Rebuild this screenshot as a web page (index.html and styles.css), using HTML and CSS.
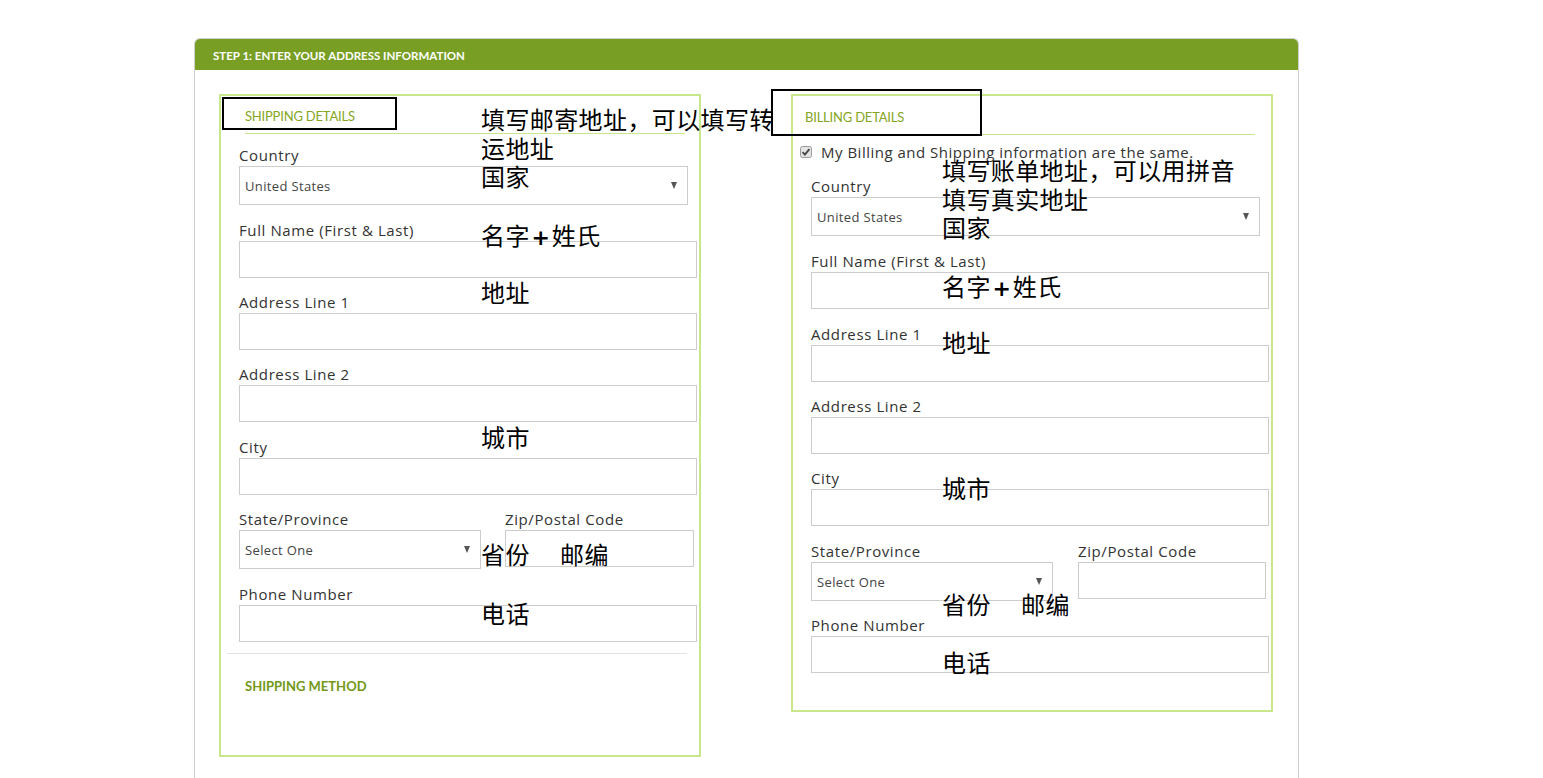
FILE: index.html
```html
<!DOCTYPE html>
<html lang="zh-CN">
<head>
  <meta charset="UTF-8">
  <title>Checkout - Address</title>
  <meta name="viewport" content="width=device-width, initial-scale=1">
  <link rel="stylesheet" href="styles.css">
</head>
<body>

<div class="panel">
  <div class="panel-head">STEP 1: ENTER YOUR ADDRESS INFORMATION</div>
  <div class="panel-body">

    <!-- shipping -->
    <div class="box shipping">
      <h3 class="box-title">SHIPPING DETAILS</h3>
      <div class="field sel">
        <label>Country</label>
        <div class="select wide"><select><option>United States</option></select></div>
      </div>
      <div class="field">
        <label>Full Name (First &amp; Last)</label>
        <input type="text">
      </div>
      <div class="field">
        <label>Address Line 1</label>
        <input type="text">
      </div>
      <div class="field gap">
        <label>Address Line 2</label>
        <input type="text">
      </div>
      <div class="field">
        <label>City</label>
        <input type="text">
      </div>
      <div class="field-row">
        <div class="field sel">
          <label>State/Province</label>
          <div class="select state"><select><option>Select One</option></select></div>
        </div>
        <div class="field zip">
          <label>Zip/Postal Code</label>
          <input type="text">
        </div>
      </div>
      <div class="field last">
        <label>Phone Number</label>
        <input type="text">
      </div>
      <hr class="sep">
      <h3 class="method">SHIPPING METHOD</h3>
    </div>

    <!-- billing -->
    <div class="box billing">
      <h3 class="box-title">BILLING DETAILS</h3>
      <div class="same">
        <svg class="check" width="12" height="12" viewBox="0 0 12 12">
          <rect x="0.5" y="0.5" width="11" height="11" rx="2" fill="#e4e4e4" stroke="#9a9a9a"/>
          <path d="M2.6 6.2 L4.9 8.6 L9.4 3.2" fill="none" stroke="#444" stroke-width="1.8"/>
        </svg>
        <span>My Billing and Shipping information are the same.</span>
      </div>
      <div class="field sel">
        <label>Country</label>
        <div class="select wide"><select><option>United States</option></select></div>
      </div>
      <div class="field gap">
        <label>Full Name (First &amp; Last)</label>
        <input type="text">
      </div>
      <div class="field">
        <label>Address Line 1</label>
        <input type="text">
      </div>
      <div class="field">
        <label>Address Line 2</label>
        <input type="text">
      </div>
      <div class="field gap">
        <label>City</label>
        <input type="text">
      </div>
      <div class="field-row">
        <div class="field sel tight">
          <label>State/Province</label>
          <div class="select state"><select><option>Select One</option></select></div>
        </div>
        <div class="field zip">
          <label>Zip/Postal Code</label>
          <input type="text">
        </div>
      </div>
      <div class="field">
        <label>Phone Number</label>
        <input type="text">
      </div>
    </div>

  </div>
</div>

<!-- notes drawn over the form -->
<div class="mark mark-ship"></div>
<div class="mark mark-bill"></div>

<div class="note s-intro">填写邮寄地址，可以填写转<br>运地址<br>国家</div>
<div class="note s-name">名字<b>+</b>姓氏</div>
<div class="note s-addr">地址</div>
<div class="note s-city">城市</div>
<div class="note s-state">省份</div>
<div class="note s-zip">邮编</div>
<div class="note s-phone">电话</div>

<div class="note b-intro">填写账单地址，可以用拼音<br>填写真实地址<br>国家</div>
<div class="note b-name">名字<b>+</b>姓氏</div>
<div class="note b-addr">地址</div>
<div class="note b-city">城市</div>
<div class="note b-state">省份</div>
<div class="note b-zip">邮编</div>
<div class="note b-phone">电话</div>

</body>
</html>
```

FILE: styles.css
```css
body { margin: 0; background: #fff; font-family: "Open Sans", "Noto Sans", sans-serif; color: #333; position: relative; }

.panel { width: 1105px; box-sizing: border-box; margin: 38px 0 0 194px; border: 1px solid #cfcfcf; border-bottom: none; border-radius: 6px 6px 0 0; min-height: 760px; }
.panel-head { background: #789e24; color: #fff; font-family: Lato, sans-serif; font-size: 11.5px; font-weight: bold; height: 29px; line-height: 29px; padding: 2px 0 0 18px; border-radius: 5px 5px 0 0; }
.panel-body { display: flex; align-items: flex-start; gap: 90px; padding: 24px 0 40px 24px; }

.box { width: 482px; box-sizing: border-box; border: 2px solid #c8e68a; padding: 0 0 0 18px; }
.billing { padding-bottom: 22px; }

.box-title { margin: 0 14px 12px 6px; padding: 12px 0 9px; font-family: Lato, sans-serif; font-size: 13px; line-height: 16px; font-weight: normal; color: #86a623; border-bottom: 1px solid #c8e68a; letter-spacing: -0.2px; }
.billing .box-title { margin: 0 16px 8px -6px; padding-top: 13px; }

.same { display: flex; align-items: center; gap: 9px; margin: 0 0 16px -11px; font-size: 15px; line-height: 18px; letter-spacing: 0.5px; color: #333; }
.check { flex: none; }

.field { margin-bottom: 15px; }
.field.gap, .field.sel { margin-bottom: 16px; }
.field.sel.tight { margin-bottom: 15px; }
.field.last { margin-bottom: 0; }
.field label { display: block; font-size: 15px; line-height: 18px; letter-spacing: 0.6px; margin-bottom: 2px; color: #333; }

.field input { display: block; width: 458px; height: 37px; box-sizing: border-box; border: 1px solid #ccc; margin: 0; padding: 0 5px; font-family: inherit; }

.select { position: relative; }
.select select { display: block; width: 100%; height: 39px; box-sizing: border-box; border: 1px solid #ccc; border-radius: 0; background: #fff; -webkit-appearance: none; appearance: none; margin: 0; padding: 0 0 0 5px; font-family: "Open Sans", sans-serif; font-size: 13px; letter-spacing: 0.35px; color: #444; }
.select::after { content: ""; position: absolute; right: 11px; top: 16px; border-top: 7px solid #555; border-left: 3.5px solid transparent; border-right: 3.5px solid transparent; }
.select.wide { width: 449px; }
.select.state { width: 242px; }

.field-row { display: flex; gap: 24px; align-items: flex-start; }
.field-row .field.zip input { width: 189px; }
.billing .field-row { gap: 25px; }
.billing .field-row .field.zip input { width: 188px; }

.sep { margin: 11px 0 0 -12px; width: 460px; border: none; border-top: 1px solid #e3e3e3; }
.method { margin: 24px 0 0 6px; padding-bottom: 61px; font-family: Lato, sans-serif; font-size: 13px; line-height: 16px; font-weight: bold; color: #729816; }

/* black marker frames */
.mark { position: absolute; border: 2px solid #000; box-sizing: border-box; }
.mark-ship { left: 222px; top: 97px; width: 175px; height: 33px; }
.mark-bill { left: 771px; top: 89px; width: 211px; height: 47px; }

/* chinese notes */
.note { position: absolute; font-family: "Noto Sans CJK SC", sans-serif; font-size: 24px; line-height: 28.5px; letter-spacing: 0.4px; color: #000; white-space: nowrap; }
.note b { display: inline-block; width: 22px; text-align: center; font-family: "DejaVu Sans", sans-serif; font-weight: bold; font-size: 22px; }
.s-intro { left: 481px; top: 105px; }
.s-name { left: 481px; top: 221px; }
.s-addr { left: 481px; top: 278px; }
.s-city { left: 481px; top: 423px; }
.s-state { left: 481px; top: 540px; }
.s-zip { left: 560px; top: 540px; }
.s-phone { left: 481px; top: 599px; }

.b-intro { left: 942px; top: 156px; }
.b-name { left: 942px; top: 272px; }
.b-addr { left: 942px; top: 328px; }
.b-city { left: 942px; top: 474px; }
.b-state { left: 942px; top: 590px; }
.b-zip { left: 1021px; top: 590px; }
.b-phone { left: 942px; top: 648px; }
```
